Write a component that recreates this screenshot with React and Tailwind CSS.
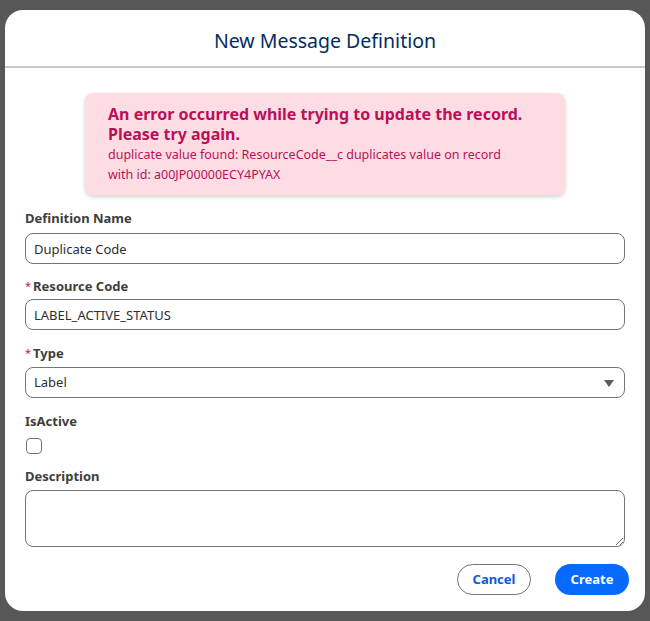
import { useState } from 'react';

function Label({ children, required }) {
  return (
    <div className="flex items-center text-[13px] font-bold leading-[18px] text-[#3e3e3c]">
      {required && <span className="mr-[2px] text-[11px] font-normal text-[#c2185b]">*</span>}
      {children}
    </div>
  );
}

export default function App() {
  const [name, setName] = useState('Duplicate Code');
  const [code, setCode] = useState('LABEL_ACTIVE_STATUS');
  const [type, setType] = useState('Label');
  const [active, setActive] = useState(false);
  const [desc, setDesc] = useState('');

  const inputCls =
    'h-[31px] w-full rounded-[8px] border border-[#747474] bg-white px-[8px] text-[13px] text-[#2e2e2e] outline-none';

  return (
    <div
      className="min-h-[621px] bg-[#575757] px-[5px] pt-[10px]"
      style={{ fontFamily: '"Noto Sans", "Open Sans", sans-serif' }}
    >
      <div className="flex h-[601px] flex-col rounded-[18px] bg-white">
        {/* header */}
        <div className="flex h-[58px] items-center justify-center border-b-2 border-[#c9c9c9] pt-[6px]">
          <h2 className="text-[19.5px] leading-none text-[#032d60]">New Message Definition</h2>
        </div>

        <div className="flex flex-1 flex-col px-[20px]">
          {/* error box */}
          <div className="mx-[60px] mt-[25px] rounded-[8px] bg-[#fddde3] pb-[10px] pl-[23px] pr-[40px] pt-[11px] text-[#ba0f59] shadow-[0_2px_4px_rgba(0,0,0,0.18)]">
            <p className="text-[16px] font-bold leading-[20px]">
              An error occurred while trying to update the record. Please try again.
            </p>
            <p className="mt-[1px] text-[12.5px] leading-[20px]">
              duplicate value found: ResourceCode__c duplicates value on record with id: a00JP00000ECY4PYAX
            </p>
          </div>

          <div className="mt-[14px] flex flex-col">
            <Label>Definition Name</Label>
            <input
              className={`${inputCls} mt-[6px]`}
              value={name}
              onChange={(e) => setName(e.target.value)}
            />

            <div className="mt-[13px]">
              <Label required>Resource Code</Label>
            </div>
            <input
              className={`${inputCls} mt-[4px]`}
              value={code}
              onChange={(e) => setCode(e.target.value)}
            />

            <div className="mt-[14px]">
              <Label required>Type</Label>
            </div>
            <div className="relative mt-[5px]">
              <select
                className={`${inputCls} appearance-none`}
                value={type}
                onChange={(e) => setType(e.target.value)}
              >
                <option>Label</option>
                <option>Message</option>
                <option>Error</option>
              </select>
              <svg
                className="pointer-events-none absolute right-[11px] top-[13px]"
                width="10"
                height="7"
                viewBox="0 0 10 7"
              >
                <path d="M0 0h10L5 7z" fill="#5c5c5c" />
              </svg>
            </div>

            <div className="mt-[14px]">
              <Label>IsActive</Label>
            </div>
            <div className="mt-[8px] flex">
              <button
                type="button"
                onClick={() => setActive(!active)}
                className="ml-[1px] h-[16px] w-[16px] rounded-[4px] border border-[#747474] bg-white"
              />
            </div>

            <div className="mt-[13px]">
              <Label>Description</Label>
            </div>
            <textarea
              className="mt-[5px] h-[57px] w-full resize-y rounded-[8px] border border-[#747474] px-[8px] py-[4px] text-[13px] outline-none"
              value={desc}
              onChange={(e) => setDesc(e.target.value)}
            />
          </div>

          <div className="mt-[17px] flex justify-end gap-[24px]">
            <button className="h-[31px] w-[74px] rounded-full border border-[#747474] bg-white text-[13px] font-bold text-[#0b5cd5]">
              Cancel
            </button>
            <button className="-mr-[4px] h-[31px] w-[74px] rounded-full bg-[#066afe] text-[13px] font-bold text-white">
              Create
            </button>
          </div>
        </div>
      </div>
    </div>
  );
}
